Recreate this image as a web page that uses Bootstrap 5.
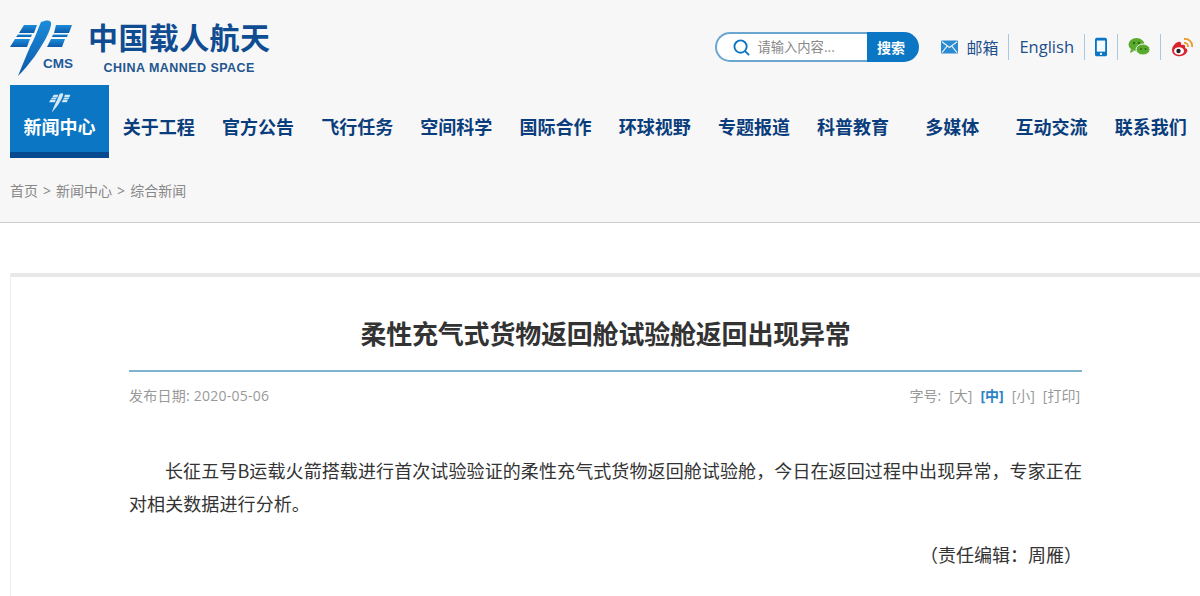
<!DOCTYPE html>
<html lang="zh">
<head>
<meta charset="utf-8">
<link href="https://cdn.jsdelivr.net/npm/bootstrap@5.3.0/dist/css/bootstrap.min.css" rel="stylesheet">
<style>
html,body{height:596px;overflow:hidden;background:#fff;}
body{font-family:"Noto Sans CJK SC","Noto Sans",sans-serif;color:#333;}
.site-head{background:#f7f7f7;height:223px;border-bottom:1px solid #ccc;}
.top-row{height:85px;padding:9px 7px 0 10px;}
.logo-mark{margin-top:4px;margin-right:14px;}
.logo-cms{font-family:"Liberation Sans",sans-serif;font-size:13.5px;font-weight:700;fill:#1c5a9c;}
.brand-block{margin-top:-1px;}
.brand-cn{font-size:30px;line-height:34px;font-weight:700;color:#0f4c92;letter-spacing:.4px;white-space:nowrap;}
.brand-en{font-family:"Liberation Sans",sans-serif;font-size:12.5px;line-height:14px;font-weight:700;color:#24568f;letter-spacing:.45px;text-align:center;margin-top:8px;white-space:nowrap;}
.search-box{width:204px;height:30px;margin-right:22px;}
.search-field{flex:1;border:2px solid #6ba6d0;border-right:0;border-radius:15px 0 0 15px;background:#fff;padding-left:16px;}
.search-ph{font-size:13.3px;color:#888;margin-left:7px;white-space:nowrap;}
.search-go{width:52px;background:#0a76c4;color:#fff;font-size:14px;font-weight:700;padding-right:5px;border-radius:0 15px 15px 0;}
.tool-group{gap:10px;}
.tool-mail{gap:8px;}
.tool-txt{font-size:16px;color:#1c4f8c;white-space:nowrap;}
.tool-sep{width:1px;height:26px;background:#a9c9e2;}
.tool-lat{font-family:"Open Sans",sans-serif;font-size:16.5px;}
.main-nav{padding-left:10px;display:grid;grid-template-columns:repeat(12,99.2px);height:73px;}
.nav-cell{font-size:18px;font-weight:700;color:#0a3d7c;display:flex;align-items:center;justify-content:center;white-space:nowrap;text-decoration:none;padding-top:9px;}
.nav-on{background:#0a76c4;color:#fff;border-bottom:6px solid #074a8f;flex-direction:column;justify-content:flex-start;padding-top:8px;}
.nav-on svg{margin-bottom:0;}
.crumbs{font-family:"Open Sans","Noto Sans CJK SC",sans-serif;font-size:14px;color:#888;padding:23px 0 0 10px;line-height:20px;word-spacing:1.4px;}
.paper{margin:50px 0 0 10px;border-top:4px solid #e8e8e8;border-left:1px solid #eee;padding:0 118px;height:330px;}
.paper-title{font-size:26px;font-weight:700;color:#333;text-align:center;margin:0;padding-top:37px;line-height:38px;height:95px;border-bottom:2px solid #7fb3d0;letter-spacing:-.2px;}
.meta-row{font-family:"Open Sans","Noto Sans CJK SC",sans-serif;font-size:14px;color:#999;padding:14px 2px 0 0;line-height:20px;}
.meta-date{letter-spacing:.25px;}
.meta-on{color:#2b83c5;font-weight:700;}
.body-txt{font-size:18px;line-height:33px;color:#333;margin:0;padding-top:48px;text-indent:36px;letter-spacing:.09px;text-align:justify;}
.sign-txt{font-size:18px;line-height:33px;color:#333;text-align:right;padding:18px 0 0;margin:0;}
</style>
</head>
<body>
<header class="site-head">
  <div class="top-row d-flex align-items-center">
    <svg class="logo-mark flex-shrink-0" width="64" height="58" viewBox="10 22 64 58" role="img" aria-label="CMS">
      <defs><linearGradient id="lg" x1="0" y1="0" x2="0" y2="1"><stop offset="0" stop-color="#1b8cdb"/><stop offset="1" stop-color="#0c5aa8"/></linearGradient></defs>
      <g fill="url(#lg)">
        <path d="M24 27h13l-3 8H19z"/><path d="M18 36.500h14l-1 2.500H16z"/><path d="M15 41h15l-3 8H10z"/>
        <path d="M56 27h16l-3 8H54z"/><path d="M53 36.500h15l-1 2.500H52z"/><path d="M51 41h14l-3 8H47z"/>
        <path d="M41 24c6-2.500 11-2.500 10 3-2 10-9 20-16 31-6 8-12 15-17 20 4-10 8-20 12-29 5-9 8-18 11-25z"/>
      </g>
      <text class="logo-cms" x="43" y="69.500">CMS</text>
    </svg>
    <div class="brand-block me-auto">
      <div class="brand-cn">中国载人航天</div>
      <div class="brand-en">CHINA MANNED SPACE</div>
    </div>
    <div class="search-box d-flex">
      <div class="search-field d-flex align-items-center">
        <svg width="17" height="17" viewBox="0 0 18 18" fill="none" stroke="#0a76c4" stroke-width="2"><circle cx="8" cy="8" r="6.500"/><path d="M12.500 12.500l4.500 4.500"/></svg>
        <span class="search-ph">请输入内容...</span>
      </div>
      <span class="search-go d-flex align-items-center justify-content-center">搜索</span>
    </div>
    <div class="tool-group d-flex align-items-center">
      <span class="tool-mail d-flex align-items-center">
        <svg width="17" height="14" viewBox="0 0 18 14"><rect width="18" height="14" rx="1" fill="#2b8ad0"/><path d="M1 1.500l8 6 8-6M1 13l5.500-7M17 13l-5.500-7" fill="none" stroke="#e8f3fb" stroke-width="1.200"/></svg>
        <span class="tool-txt">邮箱</span>
      </span>
      <span class="tool-sep"></span>
      <span class="tool-txt tool-lat">English</span><span class="tool-sep"></span>
      <svg width="12" height="20" viewBox="0 0 13 20"><rect width="13" height="20" rx="2" fill="#0a76c4"/><rect x="2" y="3" width="9" height="12" fill="#f4fafe"/><circle cx="6.500" cy="17.500" r="1.200" fill="#fff"/></svg>
      <span class="tool-sep"></span>
      <svg width="22" height="18" viewBox="0 0 22 18"><ellipse cx="8.500" cy="6.500" rx="8" ry="6.500" fill="#5aaa2d"/><path d="M3 11l-1 4 4-2z" fill="#5aaa2d"/><ellipse cx="15" cy="11.500" rx="7" ry="5.500" fill="#5aaa2d" stroke="#f7f7f7"/><g fill="#2f6b14"><circle cx="6" cy="5" r="1.200"/><circle cx="11" cy="5" r="1.200"/><circle cx="13" cy="11" r="1"/><circle cx="17.500" cy="11" r="1"/></g></svg>
      <span class="tool-sep"></span>
      <svg width="22" height="19" viewBox="0 0 22 19"><path d="M1 12c0-4 5-9 8-8 2 .5 1 3 1 3 3-1 5 0 4 3 2 .5 3 2 2 4-2 4-7 5-10 4-3-.5-5-3-5-6z" fill="#d9232e"/><ellipse cx="8" cy="13" rx="5" ry="3.800" fill="#fff"/><circle cx="7.500" cy="13" r="2.200" fill="#222"/><path d="M13 1a7 7 0 0 1 8 8M13 5a3.500 3.500 0 0 1 4 4" fill="none" stroke="#eb9a2c" stroke-width="1.800"/></svg>
    </div>
  </div>
  <nav class="main-nav">
    <a class="nav-cell nav-on" href="#">
      <svg width="22" height="20" viewBox="10 22 64 58"><g fill="#d4e8f7"><path d="M24 27h13l-3 8H19zM18 36.500h14l-1 2.500H16zM15 41h15l-3 8H10zM56 27h16l-3 8H54zM53 36.500h15l-1 2.500H52zM51 41h14l-3 8H47zM41 24c6-2.500 11-2.500 10 3-2 10-9 20-16 31-6 8-12 15-17 20 4-10 8-20 12-29 5-9 8-18 11-25z"/></g></svg>
      <span>新闻中心</span>
    </a>
    <a class="nav-cell" href="#">关于工程</a>
    <a class="nav-cell" href="#">官方公告</a>
    <a class="nav-cell" href="#">飞行任务</a>
    <a class="nav-cell" href="#">空间科学</a>
    <a class="nav-cell" href="#">国际合作</a>
    <a class="nav-cell" href="#">环球视野</a>
    <a class="nav-cell" href="#">专题报道</a>
    <a class="nav-cell" href="#">科普教育</a>
    <a class="nav-cell" href="#">多媒体</a>
    <a class="nav-cell" href="#">互动交流</a>
    <a class="nav-cell" href="#">联系我们</a>
  </nav>
  <div class="crumbs">首页 &gt; 新闻中心 &gt; 综合新闻</div>
</header>
<main class="paper">
  <h1 class="paper-title">柔性充气式货物返回舱试验舱返回出现异常</h1>
  <div class="meta-row d-flex justify-content-between">
    <span class="meta-date">发布日期: 2020-05-06</span>
    <span class="d-flex gap-2"><span>字号:</span><span>[大]</span><span class="meta-on">[中]</span><span>[小]</span><span>[打印]</span></span>
  </div>
  <p class="body-txt">长征五号B运载火箭搭载进行首次试验验证的柔性充气式货物返回舱试验舱，今日在返回过程中出现异常，专家正在对相关数据进行分析。</p>
  <p class="sign-txt">（责任编辑：周雁）</p>
</main>
</body>
</html>
